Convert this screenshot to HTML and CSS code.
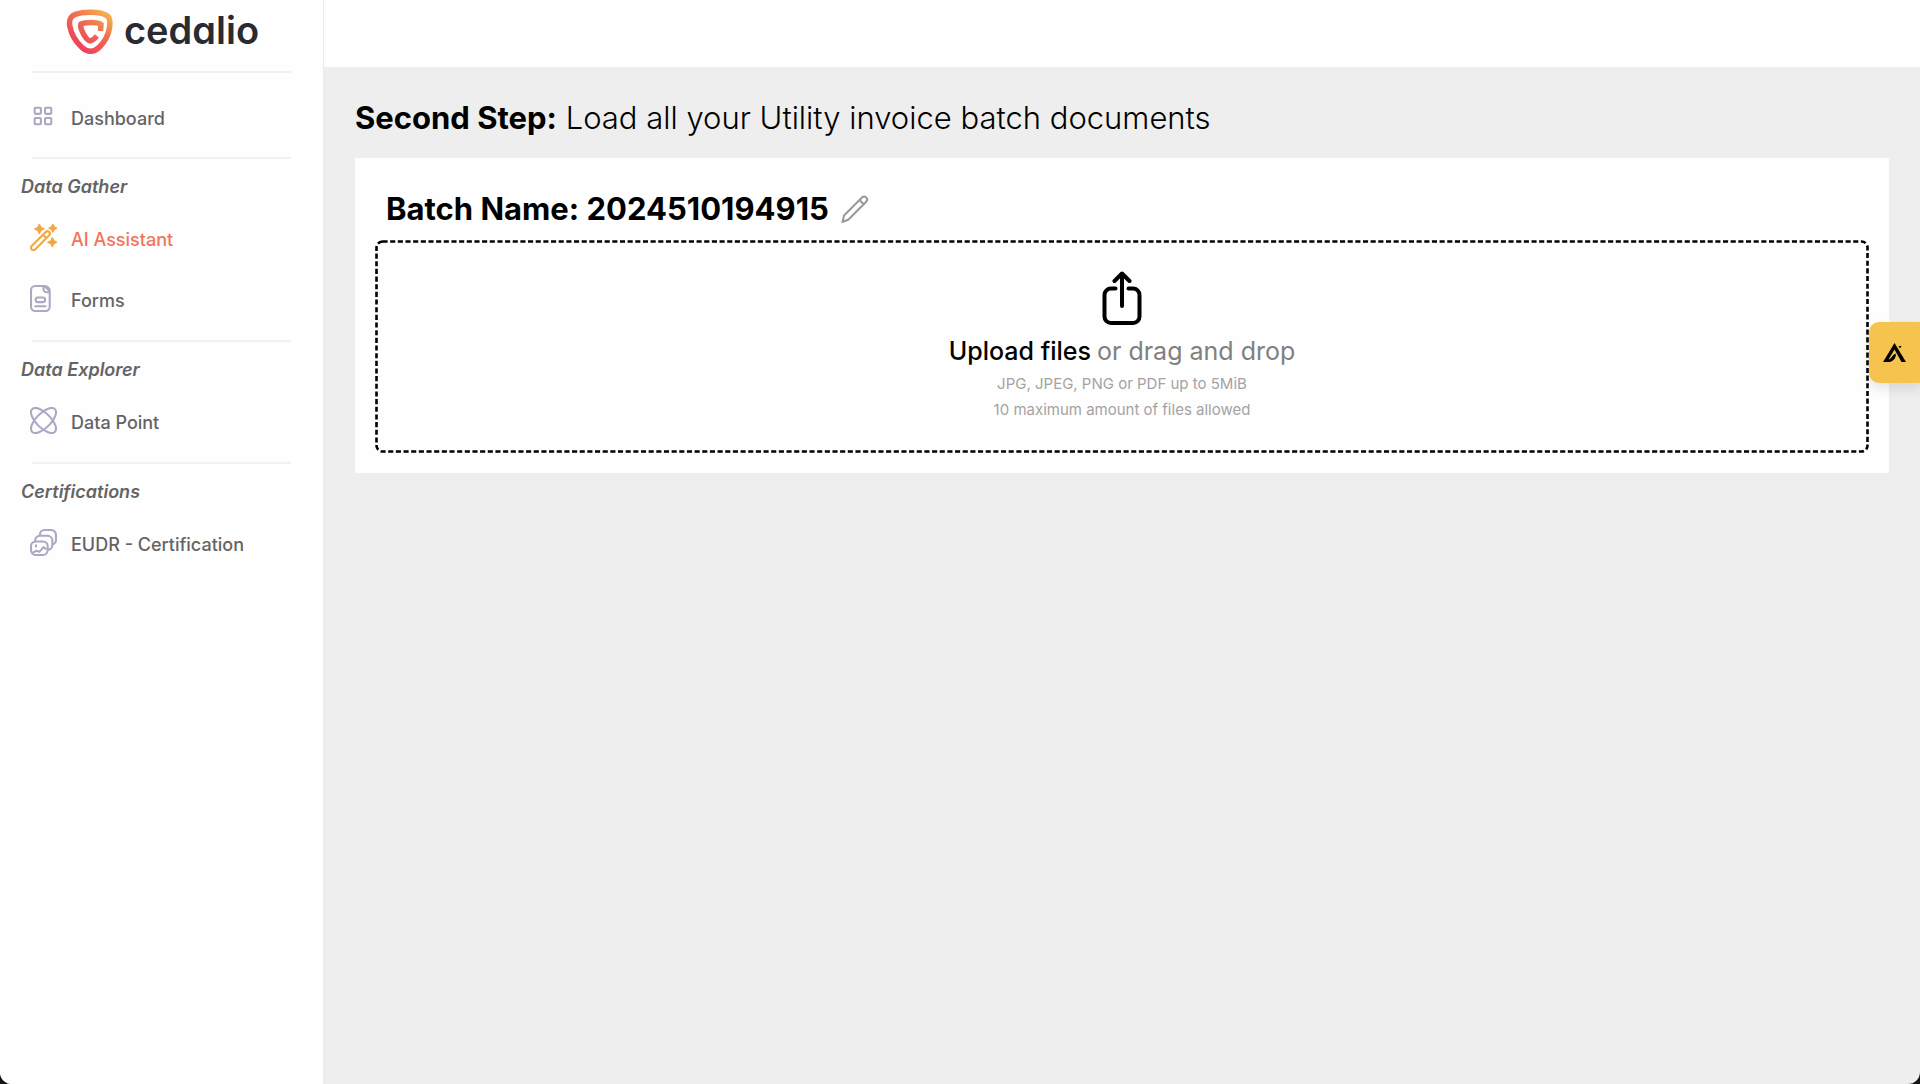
FILE: index.html
```html
<!DOCTYPE html>
<html lang="en">
<head>
  <meta charset="UTF-8">
  <title>Cedalio</title>
  <link rel="stylesheet" href="styles.css">
</head>
<body>
<div class="app">
  <aside class="sidebar">
    <a class="logo" href="#">
      <svg width="48" height="46" viewBox="0 0 48 46" fill="none">
        <defs>
          <linearGradient id="logoFill" x1="40" y1="4" x2="14" y2="40" gradientUnits="userSpaceOnUse">
            <stop offset="0" stop-color="#f6ae4c"/>
            <stop offset="0.45" stop-color="#ee6d50"/>
            <stop offset="1" stop-color="#ee405c"/>
          </linearGradient>
        </defs>
        <path d="M24 3.2C32 3 38 4.500 41.500 7C44 9 44.400 13 43.500 19C42.400 26 39 32.500 33.500 38C28 43.500 21.500 43.500 16 38.500C9.500 32.500 5 24 3.700 16.500C2.800 10.500 4.500 7.500 9 5.500C13 3.800 18.500 3.300 24 3.200Z" stroke="url(#logoFill)" stroke-width="5.500"/>
        <path d="M34.500 22L35 15.500C32 12.800 19 13 15 15C13.500 16.500 16.500 25 20.500 29.500C23.500 33 26 32.500 31 27" stroke="url(#logoFill)" stroke-width="5.500"/>
      </svg>
      <span class="logo-text">cedalio</span>
    </a>
    <hr class="divider">
    <nav class="nav nav-top">
      <a class="nav-item" href="#">
        <svg class="nav-icon" viewBox="0 0 26 26">
          <rect x="4.500" y="4.500" width="6" height="6" rx="1"/>
          <rect x="14.500" y="4.500" width="6" height="6" rx="1"/>
          <rect x="4.500" y="14.500" width="6" height="6" rx="1"/>
          <rect x="14.500" y="14.500" width="6" height="6" rx="1"/>
        </svg>
        <span class="nav-label">Dashboard</span>
      </a>
    </nav>
    <hr class="divider">
    <nav class="nav">
      <h3>Data Gather</h3>
      <a class="nav-item active" href="#">
        <svg class="nav-icon" viewBox="0 0 26 26">
          <path d="M1.600 21.200L15.200 7.600a2.300 2.300 0 0 1 3.300 3.300L4.900 24.500a2.300 2.300 0 0 1-3.300-3.300zM12.500 10.300l3.300 3.300"/>
          <path class="solid" d="M9 0l1.500 3.200 3.200 1.500-3.200 1.500-1.500 3.200-1.500-3.200-3.200-1.500 3.200-1.500zM22 0l1.300 2.700 2.700 1.300-2.700 1.300-1.300 2.700-1.300-2.700-2.700-1.300 2.700-1.300zM21.500 13l1.500 3 3 1.500-3 1.500-1.500 3-1.500-3-3-1.500 3-1.500z"/>
        </svg>
        <span class="nav-label">AI Assistant</span>
      </a>
      <a class="nav-item" href="#">
        <svg class="nav-icon" viewBox="0 0 26 26">
          <path d="M5 1h9l5 5v15a4 4 0 0 1-4 4H5a4 4 0 0 1-4-4V5a4 4 0 0 1 4-4zM13 1v3a3 3 0 0 0 3 3h3M14 1a5 5 0 0 1 5 5"/>
          <rect x="5.500" y="12" width="9" height="4.500" rx="2"/>
          <path d="M5 20.500h10"/>
        </svg>
        <span class="nav-label">Forms</span>
      </a>
    </nav>
    <hr class="divider">
    <nav class="nav">
      <h3>Data Explorer</h3>
      <a class="nav-item" href="#">
        <svg class="nav-icon" viewBox="0 0 26 26">
          <ellipse cx="13" cy="13" rx="15.500" ry="7" transform="rotate(45 13 13)"/>
          <ellipse cx="13" cy="13" rx="15.500" ry="7" transform="rotate(-45 13 13)"/>
        </svg>
        <span class="nav-label">Data Point</span>
      </a>
    </nav>
    <hr class="divider">
    <nav class="nav">
      <h3>Certifications</h3>
      <a class="nav-item" href="#">
        <svg class="nav-icon" viewBox="0 0 26 26">
          <rect x="1" y="12" width="16" height="13" rx="4.500"/>
          <path d="M5 12v-1a4.500 4.500 0 0 1 4.500-4.500H17a4.500 4.500 0 0 1 4.500 4.500v4.500a4.500 4.500 0 0 1-4.500 4.500M9.500 6.500V5.500A4.500 4.500 0 0 1 14 1h6.500A4.500 4.500 0 0 1 25 5.500v5a4.500 4.500 0 0 1-3.500 4.300"/>
          <path d="M3 22.500l3-1.500 3 1 4-4.500 2 1.500M5.800 15.800v1"/>
        </svg>
        <span class="nav-label">EUDR - Certification</span>
      </a>
    </nav>
  </aside>

  <div class="page">
    <header class="topbar"></header>
    <main class="content">
      <h1><strong>Second Step:</strong> Load all your Utility invoice batch documents</h1>
      <section class="card">
        <div class="batch">
          <h2>Batch Name: 2024510194915</h2>
          <button class="edit-btn" type="button" aria-label="Edit batch name">
            <svg width="28" height="28" viewBox="0 0 28 28">
              <path d="M1.500 27l1.500-6.500L21 2.500a2.800 2.800 0 0 1 4.200 4.200L7.500 24.500zM18.500 5l4.200 4.200"/>
            </svg>
          </button>
        </div>
        <label class="dropzone" for="files">
          <svg class="drop-outline"><rect x="1.500" y="1.500" rx="6"/></svg>
          <input type="file" id="files" class="file-input" accept=".jpg,.jpeg,.png,.pdf" multiple>
          <svg class="upload-icon" width="40" height="54" viewBox="0 0 40 54">
            <path d="M13.500 17.500H9a6.500 6.500 0 0 0-6.500 6.500v21.500A6.500 6.500 0 0 0 9 52h22a6.500 6.500 0 0 0 6.500-6.500V24a6.500 6.500 0 0 0-6.500-6.500h-4.500M20 35V2.500M12.500 10L20 2.500 27.500 10"/>
          </svg>
          <span class="drop-title"><b>Upload files</b><span>or drag and drop</span></span>
          <span class="drop-hint">JPG, JPEG, PNG or PDF up to 5MiB</span>
          <span class="drop-hint">10 maximum amount of files allowed</span>
        </label>
      </section>
    </main>
  </div>

  <button class="side-tab" type="button" aria-label="Open assistant">
    <svg width="24" height="20" viewBox="0 0 24 20">
      <path d="M0 19L11.500 0 23 19h-4.500L11.500 6.500 5.500 16.500C8.500 16 9 12 12.500 10.500 14 13.500 10.500 19 6 19zM15.500 3h3l-1.500 2.500z"/>
    </svg>
  </button>
</div>
</body>
</html>
```
FILE: styles.css
```css
* {
  box-sizing: border-box;
}
body {
  margin: 0;
  font-family: Inter, "Liberation Sans", sans-serif;
  background: #14151a;
}
h1, h2, h3 {
  margin: 0;
}
button {
  border: none;
  padding: 0;
  cursor: pointer;
}
.app {
  display: flex;
  min-height: 100vh;
  background: #eeeeee;
  border-radius: 0 0 12px 12px;
  overflow: hidden;
}

/* sidebar */
.sidebar {
  width: 324px;
  flex-shrink: 0;
  background: #fefefe;
  border-right: 1px solid #ebebeb;
}
.logo {
  display: flex;
  justify-content: center;
  align-items: center;
  gap: 10px;
  height: 63px;
  padding-left: 2px;
  text-decoration: none;
}
.logo-text {
  padding-bottom: 4px;
  font-size: 38px;
  line-height: 40px;
  font-weight: 600;
  color: #2a2b30;
  font-feature-settings: "cv11";
}
.divider {
  height: 2px;
  margin: 8px 32px 0;
  border: none;
  background: #f1f1f1;
}
.nav {
  padding-bottom: 1px;
}
.nav-top {
  padding: 15px 0 0;
}
.nav h3 {
  padding: 16px 21px 10px;
  font-size: 18px;
  line-height: 24px;
  font-weight: 600;
  font-style: italic;
  color: #646464;
}
.nav-item {
  display: flex;
  align-items: center;
  gap: 14px;
  height: 61px;
  padding: 0 30px;
  font-size: 18px;
  line-height: 24px;
  font-weight: 500;
  color: #646464;
  text-decoration: none;
}
.nav-icon {
  width: 27px;
  height: 27px;
  margin-bottom: 5px;
  fill: none;
  stroke: #aaa9c2;
  stroke-width: 2px;
  stroke-linecap: round;
  stroke-linejoin: round;
}
.active {
  color: #f3745a;
}
.active .nav-icon {
  stroke: #f3a742;
}
.active .solid {
  fill: #f3a742;
  stroke-width: 1px;
}

/* main area */
.page {
  flex: 1;
}
.topbar {
  height: 67px;
  background: #fefefe;
}
.content {
  padding: 31px;
}
h1 {
  font-size: 31px;
  line-height: 40px;
  font-weight: 300;
  color: #000000;
}
h1 strong {
  font-weight: 700;
}
.card {
  margin-top: 20px;
  padding: 31px 20px 20px;
  background: #fefefe;
}
.batch {
  display: flex;
  align-items: center;
  gap: 12px;
  padding: 0 11px 11px;
}
.batch h2 {
  font-size: 31px;
  line-height: 40px;
  font-weight: 700;
}
.edit-btn {
  display: flex;
  background: none;
}
.edit-btn svg {
  fill: none;
  stroke: #999999;
  stroke-width: 2px;
  stroke-linejoin: round;
}
.dropzone {
  position: relative;
  display: flex;
  flex-direction: column;
  align-items: center;
  padding: 31px 20px 30px;
  cursor: pointer;
}
.drop-outline {
  position: absolute;
  inset: 0;
  width: 100%;
  height: 100%;
}
.drop-outline rect {
  width: calc(100% - 3px);
  height: calc(100% - 3px);
  fill: none;
  stroke: #000000;
  stroke-width: 2.6px;
  stroke-dasharray: 5.1 2.56;
}
.file-input {
  position: absolute;
  inset: 0;
  opacity: 0;
  cursor: pointer;
}
.upload-icon {
  fill: none;
  stroke: #000000;
  stroke-width: 4px;
  stroke-linecap: round;
  stroke-linejoin: round;
}
.drop-title {
  display: flex;
  gap: 6px;
  margin: 10px 0 4px;
  font-size: 25px;
  line-height: 32px;
  color: #808080;
}
.drop-title b {
  font-weight: 500;
  color: #000000;
}
.drop-hint {
  font-size: 15px;
  line-height: 26px;
  color: #a3a3a3;
}

/* tab stuck to the right edge */
.side-tab {
  position: fixed;
  top: 322px;
  right: 0;
  width: 51px;
  height: 61px;
  display: flex;
  justify-content: center;
  align-items: center;
  background: #f6c34f;
  border-radius: 10px 0 0 10px;
  box-shadow: 0 6px 12px rgba(0,0,0,0.1);
}
```
